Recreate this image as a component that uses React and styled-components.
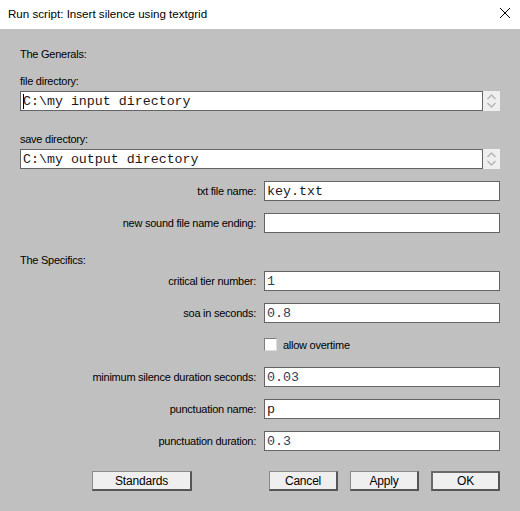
import styled, { createGlobalStyle } from "styled-components";

const GlobalStyle = createGlobalStyle`
  html, body {
    margin: 0;
    padding: 0;
    background: #c0c0c0;
  }
  body {
    font-family: "Liberation Sans", Arial, sans-serif;
    font-size: 11px;
    letter-spacing: -0.25px;
    color: #000;
  }
`;

const Window = styled.div`
  width: 520px;
  height: 511px;
  display: flex;
  flex-direction: column;
  background: #c0c0c0;
  overflow: hidden;
`;

const TitleBar = styled.div`
  height: 29px;
  flex: none;
  background: #ffffff;
  display: flex;
  align-items: center;
  justify-content: space-between;
  padding: 0 7px 3px 8px;
  box-sizing: border-box;
`;

const Title = styled.span`
  font-size: 11.6px;
  letter-spacing: 0;
  color: #000;
`;

const CloseButton = styled.span`
  display: flex;
  width: 12px;
  height: 12px;
  margin-right: 2px;
`;

const Panel = styled.div`
  display: flex;
  flex-direction: column;
  padding: 18px 20px 0 20px;
`;

const Heading = styled.div`
  height: 14px;
  line-height: 14px;
  margin-top: ${(p) => p.$top || 0}px;
`;

const PathRow = styled.div`
  display: flex;
  height: 20px;
  margin-top: ${(p) => p.$top || 0}px;
`;

const TextBox = styled.div`
  flex: 1;
  height: 20px;
  box-sizing: border-box;
  border: 1px solid #646464;
  background: #ffffff;
  display: flex;
  align-items: center;
  padding-left: 2px;
  font-family: "Liberation Mono", "Courier New", monospace;
  font-size: 13.3px;
  letter-spacing: 0;
  color: ${(p) => (p.$numeric ? "#2a3f60" : "#1a1a1a")};
  white-space: pre;
  overflow: hidden;
`;

const Caret = styled.span`
  width: 1px;
  height: 15px;
  background: #000;
  margin-right: -1px;
`;

const Spinner = styled.div`
  width: 17px;
  height: 20px;
  flex: none;
  background: #efefef;
  display: flex;
  align-items: center;
  justify-content: center;
`;

const FormRow = styled.div`
  display: grid;
  grid-template-columns: 236px 236px;
  column-gap: 8px;
  align-items: center;
  height: ${(p) => p.$height || 20}px;
  margin-top: ${(p) => p.$top || 0}px;
`;

const FieldLabel = styled.span`
  text-align: right;
  white-space: nowrap;
`;

const CheckLine = styled.label`
  grid-column: 2;
  display: flex;
  align-items: center;
  gap: 6px;
`;

const CheckBox = styled.span`
  width: 13px;
  height: 13px;
  box-sizing: border-box;
  background: #ffffff;
  border: 1px solid #7d7d7d;
  border-right-color: #dcdcdc;
  border-bottom-color: #dcdcdc;
`;

const ButtonBar = styled.div`
  display: flex;
  align-items: center;
  margin-top: 20px;
  padding-left: 72px;
`;

const ButtonGroup = styled.div`
  display: flex;
  gap: 12px;
  margin-left: auto;
`;

const Button = styled.button`
  width: ${(p) => p.$width}px;
  height: 20px;
  box-sizing: border-box;
  padding: 0;
  background: #efefef;
  border: ${(p) => (p.$default ? "2px solid #6a6a6a" : "1px solid #8a8a8a")};
  border-right-color: #555;
  border-bottom-color: #555;
  ${(p) => (p.$default ? "" : "border-right-width: 2px; border-bottom-width: 2px;")}
  font-family: "Liberation Sans", Arial, sans-serif;
  font-size: 12px;
  letter-spacing: -0.2px;
  color: #000;
  line-height: 16px;
`;

const CloseIcon = () => (
  <svg width="12" height="12" viewBox="0 0 12 12">
    <path d="M1 1 L11 11 M11 1 L1 11" stroke="#000" strokeWidth="1" fill="none" />
  </svg>
);

const SpinIcon = () => (
  <svg width="11" height="18" viewBox="0 0 11 18">
    <path d="M1.5 7 L5.5 3 L9.5 7" stroke="#b4b4b4" strokeWidth="1.4" fill="none" />
    <path d="M1.5 11 L5.5 15 L9.5 11" stroke="#b4b4b4" strokeWidth="1.4" fill="none" />
  </svg>
);

const fields = [
  { label: "critical tier number:", value: "1", numeric: true, top: 4 },
  { label: "soa in seconds:", value: "0.8", numeric: true, top: 12 },
];

const lowerFields = [
  { label: "minimum silence duration seconds:", value: "0.03", numeric: true, top: 16 },
  { label: "punctuation name:", value: "p", top: 12 },
  { label: "punctuation duration:", value: "0.3", numeric: true, top: 12 },
];

const Field = ({ label, value, numeric, top }) => (
  <FormRow $top={top}>
    <FieldLabel>{label}</FieldLabel>
    <TextBox $numeric={numeric}>{value}</TextBox>
  </FormRow>
);

export default function App() {
  return (
    <>
      <GlobalStyle />
      <Window>
        <TitleBar>
          <Title>Run script: Insert silence using textgrid</Title>
          <CloseButton>
            <CloseIcon />
          </CloseButton>
        </TitleBar>
        <Panel>
          <Heading>The Generals:</Heading>
          <Heading $top={13}>file directory:</Heading>
          <PathRow $top={3}>
            <TextBox>
              <Caret />
              C:\my input directory
            </TextBox>
            <Spinner>
              <SpinIcon />
            </Spinner>
          </PathRow>
          <Heading $top={21}>save directory:</Heading>
          <PathRow $top={3}>
            <TextBox>C:\my output directory</TextBox>
            <Spinner>
              <SpinIcon />
            </Spinner>
          </PathRow>
          <Field label="txt file name:" value="key.txt" top={12} />
          <Field label="new sound file name ending:" value="" top={12} />
          <Heading $top={20}>The Specifics:</Heading>
          {fields.map((f) => (
            <Field key={f.label} {...f} />
          ))}
          <FormRow $top={15} $height={13}>
            <CheckLine>
              <CheckBox />
              allow overtime
            </CheckLine>
          </FormRow>
          {lowerFields.map((f) => (
            <Field key={f.label} {...f} />
          ))}
          <ButtonBar>
            <Button $width={100}>Standards</Button>
            <ButtonGroup>
              <Button $width={69}>Cancel</Button>
              <Button $width={69}>Apply</Button>
              <Button $width={69} $default>
                OK
              </Button>
            </ButtonGroup>
          </ButtonBar>
        </Panel>
      </Window>
    </>
  );
}
